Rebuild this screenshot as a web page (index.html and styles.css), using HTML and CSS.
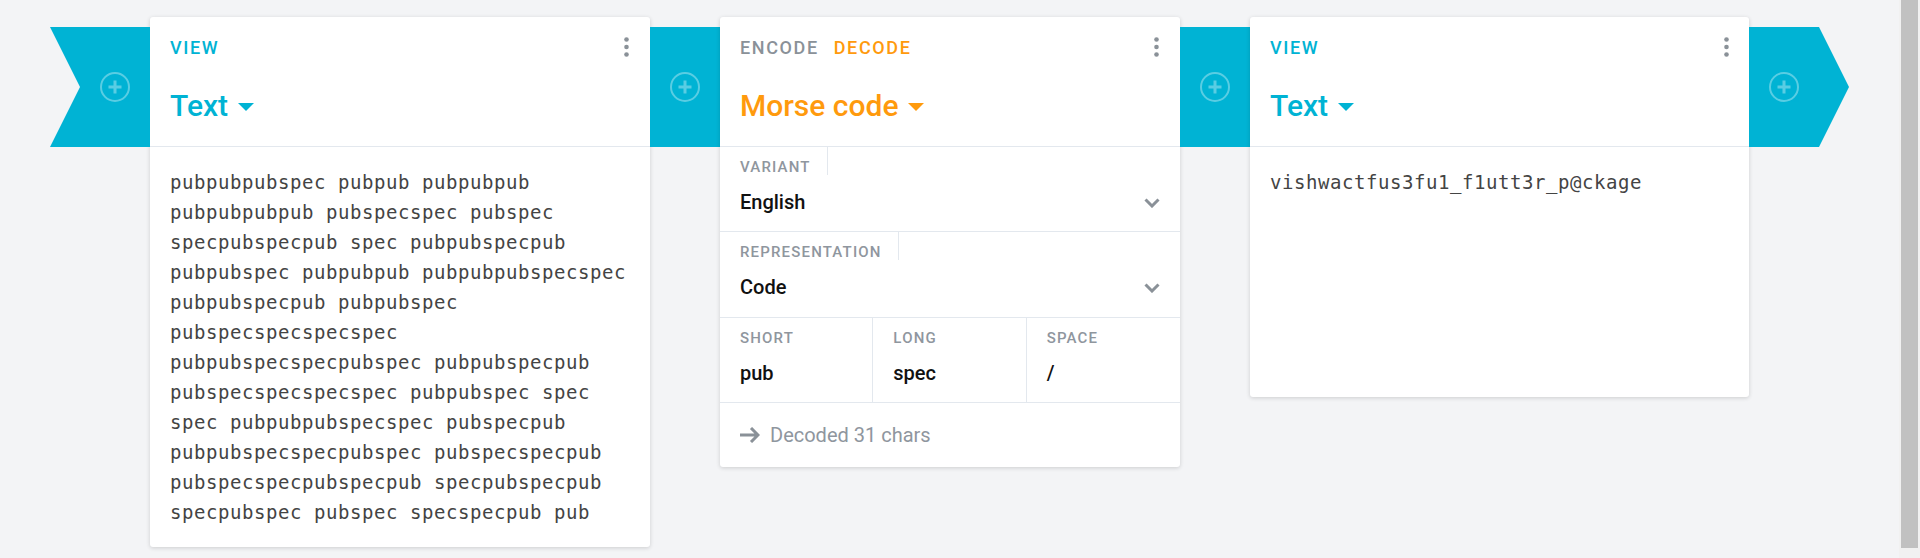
FILE: index.html
```html
<!DOCTYPE html>
<html lang="en">
<head>
    <meta charset="UTF-8">
    <meta name="viewport" content="width=device-width, initial-scale=1.0">
    <title>Morse code recipe</title>
    <link rel="stylesheet" href="styles.css">
</head>
<body>

    <main class="chain">
        <div class="ribbon ribbon-start">
            <svg class="add-icon" viewBox="0 0 30 30"><circle cx="15" cy="15" r="14"/><path d="M15 8.5v13M8.5 15h13"/></svg>
        </div>

        <section class="card card-wide">
            <header class="card-head">
                <div class="tabs">
                    <span class="tab tab-view">View</span>
                    <svg class="more" viewBox="0 0 5 20"><circle cx="2.5" cy="2.5" r="2.3"/><circle cx="2.5" cy="10" r="2.3"/><circle cx="2.5" cy="17.5" r="2.3"/></svg>
                </div>
                <h2 class="title title-view">Text <span class="caret"></span></h2>
            </header>
            <p class="text-body">pubpubpubspec pubpub pubpubpub pubpubpubpub pubspecspec pubspec specpubspecpub spec pubpubspecpub pubpubspec pubpubpub pubpubpubspecspec pubpubspecpub pubpubspec pubspecspecspecspec pubpubspecspecpubspec pubpubspecpub pubspecspecspecspec pubpubspec spec spec pubpubpubspecspec pubspecpub pubpubspecspecpubspec pubspecspecpub pubspecspecpubspecpub specpubspecpub specpubspec pubspec specspecpub pub</p>
        </section>

        <div class="ribbon">
            <svg class="add-icon" viewBox="0 0 30 30"><circle cx="15" cy="15" r="14"/><path d="M15 8.5v13M8.5 15h13"/></svg>
        </div>

        <section class="card card-narrow">
            <header class="card-head">
                <div class="tabs">
                    <span class="tab">Encode</span>
                    <span class="tab tab-active">Decode</span>
                    <svg class="more" viewBox="0 0 5 20"><circle cx="2.5" cy="2.5" r="2.3"/><circle cx="2.5" cy="10" r="2.3"/><circle cx="2.5" cy="17.5" r="2.3"/></svg>
                </div>
                <h2 class="title title-active">Morse code <span class="caret"></span></h2>
            </header>

            <div class="field">
                <label class="field-label">Variant</label>
                <div class="field-value">English
                    <svg class="chevron" viewBox="0 0 16 10"><path d="M1.5 1.5L8 8l6.5-6.5"/></svg>
                </div>
            </div>
            <div class="field">
                <label class="field-label">Representation</label>
                <div class="field-value">Code
                    <svg class="chevron" viewBox="0 0 16 10"><path d="M1.5 1.5L8 8l6.5-6.5"/></svg>
                </div>
            </div>

            <div class="field-row">
                <div class="cell">
                    <div class="cell-label">Short</div>
                    <div class="cell-value">pub</div>
                </div>
                <div class="cell">
                    <div class="cell-label">Long</div>
                    <div class="cell-value">spec</div>
                </div>
                <div class="cell">
                    <div class="cell-label">Space</div>
                    <div class="cell-value">/</div>
                </div>
            </div>

            <div class="card-foot">
                <svg class="arrow" viewBox="0 0 20 16"><path d="M0 8h18M11 1l7 7-7 7"/></svg>
                Decoded 31 chars
            </div>
        </section>

        <div class="ribbon">
            <svg class="add-icon" viewBox="0 0 30 30"><circle cx="15" cy="15" r="14"/><path d="M15 8.5v13M8.5 15h13"/></svg>
        </div>

        <section class="card card-last">
            <header class="card-head">
                <div class="tabs">
                    <span class="tab tab-view">View</span>
                    <svg class="more" viewBox="0 0 5 20"><circle cx="2.5" cy="2.5" r="2.3"/><circle cx="2.5" cy="10" r="2.3"/><circle cx="2.5" cy="17.5" r="2.3"/></svg>
                </div>
                <h2 class="title title-view">Text <span class="caret"></span></h2>
            </header>
            <p class="text-body text-short">vishwactfus3fu1_f1utt3r_p@ckage</p>
        </section>

        <div class="ribbon ribbon-end">
            <svg class="add-icon" viewBox="0 0 30 30"><circle cx="15" cy="15" r="14"/><path d="M15 8.5v13M8.5 15h13"/></svg>
        </div>
    </main>

    <div class="scrollbar">
        <div class="scrollbar-thumb"></div>
    </div>

</body>
</html>
```

FILE: styles.css
```css
* {
    box-sizing: border-box;
}
body {
    margin: 0;
    height: 100vh;
    overflow: hidden;
    display: flex;
    background-color: #f3f4f6;
    font-family: Roboto, sans-serif;
}
.chain {
    flex: 1;
    display: flex;
    align-items: flex-start;
    padding: 17px 0 0 50px;
}
.scrollbar {
    width: 21px;
    padding: 0 2px 10px;
    background-color: #f1f1f1;
}
.scrollbar-thumb {
    height: 100%;
    background-color: #c1c1c1;
}
.ribbon {
    width: 70px;
    height: 120px;
    margin-top: 10px;
    display: flex;
    align-items: center;
    justify-content: center;
    background-color: #00b3d4;
}
.ribbon-start {
    width: 100px;
    padding-left: 30px;
    clip-path: polygon(0 0, 100% 0, 100% 100%, 0 100%, 30px 50%);
}
.ribbon-end {
    width: 100px;
    padding-right: 30px;
    clip-path: polygon(0 0, 70px 0, 100% 50%, 70px 100%, 0 100%);
}
.add-icon {
    width: 30px;
    height: 30px;
    fill: none;
    stroke: #ffffff;
    stroke-width: 2;
    opacity: 0.35;
}
.add-icon path {
    stroke-width: 3;
}
.card {
    background-color: #ffffff;
    border-radius: 3px;
    box-shadow: 0 1px 4px rgba(0, 0, 0, 0.16);
}
.card-wide {
    width: 500px;
}
.card-narrow {
    width: 460px;
}
.card-last {
    width: 499px;
}
.card-head {
    height: 130px;
    padding: 0 20px;
    border-bottom: 1px solid #e3e8ee;
}
.tabs {
    height: 60px;
    display: flex;
    align-items: center;
    gap: 15px;
}
.tab {
    font-size: 18px;
    font-weight: 500;
    letter-spacing: 0.09em;
    text-transform: uppercase;
    color: #8a9198;
}
.tab-view {
    color: #00b3d4;
}
.tab-active {
    color: #ff9a0d;
}
.more {
    width: 5px;
    height: 20px;
    margin-left: auto;
    margin-right: 1px;
    fill: #8a9198;
}
.card-last .more {
    margin-right: 0;
}
.title {
    margin: 9px 0 0;
    font-size: 30px;
    font-weight: 500;
    line-height: 40px;
    display: flex;
    align-items: center;
    gap: 10px;
}
.title-view {
    color: #00b3d4;
}
.title-active {
    color: #ff9a0d;
}
.caret {
    width: 0;
    height: 0;
    border-left: 8px solid transparent;
    border-right: 8px solid transparent;
    border-top: 8px solid currentColor;
    margin-top: 2px;
}
.text-body {
    margin: 0;
    padding: 20px 20px 20px;
    font-family: "DejaVu Sans Mono", monospace;
    font-size: 19px;
    letter-spacing: 0.56px;
    line-height: 30px;
    color: #444444;
}
.text-short {
    height: 250px;
}
.field {
    height: 85px;
    padding: 0 20px;
    border-bottom: 1px solid #e3e8ee;
}
.field + .field {
    height: 86px;
}
.field-label {
    display: inline-block;
    height: 28px;
    margin-left: -20px;
    padding: 13px 16px 0 20px;
    border-right: 1px solid #e3e8ee;
    font-size: 15px;
    line-height: 14px;
    font-weight: 500;
    letter-spacing: 0.078em;
    text-transform: uppercase;
    color: #8f969e;
}
.field-value {
    display: flex;
    align-items: center;
    justify-content: space-between;
    height: 32px;
    margin-top: 10px;
    font-size: 20px;
    font-weight: 500;
    color: #111111;
}
.chevron {
    width: 16px;
    height: 10px;
    margin-top: 2px;
    fill: none;
    stroke: #8a9198;
    stroke-width: 3;
}
.field-row {
    display: grid;
    grid-template-columns: repeat(3, 1fr);
    border-bottom: 1px solid #e3e8ee;
}
.cell {
    height: 84px;
    padding: 13px 20px 0;
    border-right: 1px solid #e3e8ee;
}
.cell:last-child {
    border-right: none;
}
.cell-label {
    font-size: 15px;
    line-height: 14px;
    font-weight: 500;
    letter-spacing: 0.078em;
    text-transform: uppercase;
    color: #8f969e;
}
.cell-value {
    margin-top: 16px;
    font-size: 20px;
    font-weight: 500;
    color: #111111;
}
.card-foot {
    height: 64px;
    padding: 0 20px;
    display: flex;
    align-items: center;
    gap: 10px;
    font-size: 20px;
    color: #8f969e;
}
.arrow {
    width: 20px;
    height: 16px;
    fill: none;
    stroke: #8a9198;
    stroke-width: 3;
}
```
